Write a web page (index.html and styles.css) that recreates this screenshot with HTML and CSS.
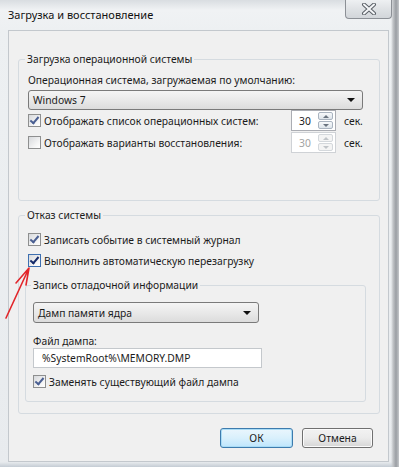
FILE: index.html
```html
<!DOCTYPE html>
<html lang="ru">
<head>
  <meta charset="UTF-8" />
  <title>Загрузка и восстановление</title>
  <link rel="stylesheet" href="styles.css">
</head>
<body>

  <div class="window">
    <div class="titlebar">
      <span class="title">Загрузка и восстановление</span>
      <span class="close">
        <svg width="16" height="12" viewBox="0 0 16 12">
          <path d="M3 1.5 L13 10.5 M13 1.5 L3 10.5" stroke="#5a5f66" stroke-width="4" stroke-linecap="round"/>
          <path d="M3 1.5 L13 10.5 M13 1.5 L3 10.5" stroke="#f4f6f8" stroke-width="2" stroke-linecap="round"/>
        </svg>
      </span>
    </div>

    <div class="client">
      <fieldset class="group group-boot">
        <legend>Загрузка операционной системы</legend>
        <div class="caption">Операционная система, загружаемая по умолчанию:</div>
        <div class="combo combo-os"><span>Windows 7</span><i class="arrow"></i></div>
        <div class="row">
          <span class="check checked"></span>
          <span class="label grow">Отображать список операционных систем:</span>
          <span class="spin"><span class="num">30</span><span class="spin-btns"><b class="up"></b><b class="down"></b></span></span>
          <span class="unit">сек.</span>
        </div>
        <div class="row">
          <span class="check"></span>
          <span class="label grow">Отображать варианты восстановления:</span>
          <span class="spin disabled"><span class="num">30</span><span class="spin-btns"><b class="up"></b><b class="down"></b></span></span>
          <span class="unit">сек.</span>
        </div>
      </fieldset>

      <fieldset class="group group-fail">
        <legend>Отказ системы</legend>
        <div class="row">
          <span class="check checked"></span>
          <span class="label">Записать событие в системный журнал</span>
        </div>
        <div class="row">
          <span class="check checked focused"></span>
          <span class="label">Выполнить автоматическую перезагрузку</span>
        </div>

        <fieldset class="group group-dump">
          <legend>Запись отладочной информации</legend>
          <div class="combo combo-dump"><span>Дамп памяти ядра</span><i class="arrow"></i></div>
          <div class="caption caption-file">Файл дампа:</div>
          <div class="textbox">%SystemRoot%\MEMORY.DMP</div>
          <div class="row">
            <span class="check checked"></span>
            <span class="label">Заменять существующий файл дампа</span>
          </div>
        </fieldset>
      </fieldset>

      <div class="buttons">
        <span class="btn btn-default">ОК</span>
        <span class="btn btn-cancel">Отмена</span>
      </div>
    </div>

    <!-- red pointer drawn over the screenshot -->
    <svg class="pointer" width="40" height="60" viewBox="0 0 40 60">
      <path d="M29 2 L6 52 M29 2 L16 17 M29 2 L26 19" stroke="#e2262b" stroke-width="1.6" fill="none" stroke-linecap="round"/>
    </svg>
  </div>

</body>
</html>
```

FILE: styles.css
```css
body {
  margin: 0;
  font-family: 'Noto Sans', 'Open Sans', sans-serif;
  font-size: 10.3px;
  color: #1b1b1b;
  background: #c9d2da;
}

.window {
  position: relative;
  width: 399px;
  height: 467px;
  overflow: hidden;
  background:
    linear-gradient(to right, transparent 391px, #c2c5c8 393px, #9a9ea3 396px, #c4c7ca 399px),
    linear-gradient(to bottom, transparent 462px, #c4ccd4 467px),
    linear-gradient(#d9dde1 0, #f0f2f4 10px, #edf0f2 30px, #e8ebee 100%);
}

.titlebar {
  height: 30px;
  display: flex;
  align-items: flex-start;
  justify-content: space-between;
  padding: 0 7px 0 8px;
}

.title {
  font-size: 11px;
  line-height: 16px;
  margin-top: 7px;
  color: #111;
}

.close {
  width: 45px;
  height: 18px;
  border: 1px solid #8c9096;
  border-top: none;
  border-radius: 0 0 4px 4px;
  background: linear-gradient(#eef0f2, #dfe2e5 50%, #d2d6da);
  display: flex;
  align-items: center;
  justify-content: center;
}

.client {
  box-sizing: border-box;
  height: 432px;
  margin: 0 10px 0 8px;
  padding: 20px 0 0 0;
  border: 1px solid #c3c8cd;
  background: #f0f0f0;
}

/* group boxes */
.group {
  margin: 0;
  border: 1px solid #d5dbe0;
  border-radius: 3px;
  min-inline-size: 0;
}
.group legend {
  padding: 0 2px;
  line-height: 16px;
  color: #1b1b1b;
}

.group-boot {
  margin: 0 8px 0 9px;
  height: 150px;
  box-sizing: border-box;
  padding: 5px 9px 0 9px;
}
.group-boot legend { margin-left: -3px; }

.group-fail {
  margin: 6px 8px 0 9px;
  height: 207px;
  box-sizing: border-box;
  padding: 6px 9px 0 9px;
}
.group-fail legend { margin-left: -3px; }

.group-dump {
  margin: 6px 4px 0 -3px;
  height: 125px;
  box-sizing: border-box;
  padding: 9px 7px 0 7px;
}
.group-dump legend { margin-left: -2px; }

.caption {
  line-height: 16px;
}
.caption-file {
  line-height: 14px;
  margin-top: 11px;
}

/* combo boxes */
.combo {
  box-sizing: border-box;
  height: 20px;
  margin-top: 2px;
  display: flex;
  align-items: center;
  justify-content: space-between;
  padding: 0 7px 0 4px;
  border: 1px solid #7a7a7a;
  border-radius: 3px;
  background: linear-gradient(#f4f4f4, #e9e9e9 50%, #dcdcdc);
}
.combo-os { width: 335px; }
.combo-dump { width: 226px; height: 21px; margin-top: 0; }
.arrow {
  width: 0;
  height: 0;
  border-left: 4px solid transparent;
  border-right: 4px solid transparent;
  border-top: 4px solid #111;
}

/* check rows */
.row {
  height: 21px;
  display: flex;
  align-items: center;
}
.group-boot .row:first-of-type { margin-top: 6px; }
.group-boot .row + .row { margin-top: 1px; }
.group-dump .row { margin-top: 3px; }

.check {
  position: relative;
  box-sizing: border-box;
  width: 13px;
  height: 13px;
  margin-right: 3px;
  flex: none;
  border: 1px solid #8e8f8f;
  background: linear-gradient(135deg, #d7d9dc, #f6f6f6 70%, #fff);
}
.check.checked::after {
  content: "";
  position: absolute;
  left: 3px;
  top: 0;
  width: 3px;
  height: 7px;
  border: solid #4a5f92;
  border-width: 0 2px 2px 0;
  transform: rotate(40deg);
}
.check.focused {
  border-color: #3d6fb0;
}
.check.focused::after {
  border-color: #152b6a;
  border-width: 0 2.5px 2.5px 0;
}

.label { white-space: nowrap; }
.grow { flex: 1; }

/* spin boxes */
.spin {
  box-sizing: border-box;
  width: 45px;
  height: 21px;
  display: flex;
  align-items: center;
  justify-content: space-between;
  padding: 0 2px 0 7px;
  border: 1px solid #abadb3;
  background: #fff;
}
.spin-btns {
  display: flex;
  flex-direction: column;
  gap: 1px;
}
.spin-btns b {
  box-sizing: border-box;
  width: 15px;
  height: 8px;
  border: 1px solid #aab4c0;
  border-radius: 2px;
  background: linear-gradient(#f7f9fb, #dde4ea);
  display: flex;
  align-items: center;
  justify-content: center;
}
.spin-btns b::after {
  content: "";
  border-left: 3px solid transparent;
  border-right: 3px solid transparent;
}
.spin-btns .up::after { border-bottom: 3px solid #6a7480; }
.spin-btns .down::after { border-top: 3px solid #6a7480; }

.spin.disabled {
  border-color: #cfd2d6;
  color: #a3a3a3;
}
.spin.disabled .spin-btns b {
  border-color: #d4d8dc;
  background: #f4f4f4;
}
.spin.disabled .spin-btns b::after { border-bottom-color: #c0c4c8; border-top-color: #c0c4c8; }

.unit {
  width: 26px;
  margin-left: 8px;
}

.textbox {
  box-sizing: border-box;
  width: 229px;
  height: 20px;
  padding: 0 8px;
  line-height: 18px;
  border: 1px solid #c4c8cc;
  background: #fff;
}

/* dialog buttons */
.buttons {
  display: flex;
  justify-content: flex-end;
  gap: 9px;
  margin: 14px 15px 0 0;
}
.btn {
  box-sizing: border-box;
  height: 20px;
  line-height: 18px;
  text-align: center;
  border-radius: 3px;
}
.btn-default {
  width: 73px;
  border: 1px solid #3d7bad;
  background: linear-gradient(#eaf6fd, #d9f0fc 50%, #bee6fd);
  box-shadow: inset 0 0 0 1px #a9dcf6;
}
.btn-cancel {
  width: 71px;
  border: 1px solid #707070;
  background: linear-gradient(#f2f2f2, #ebebeb 50%, #d6d6d6);
  box-shadow: inset 0 0 0 1px #fbfbfb;
}

.pointer {
  position: absolute;
  left: 0;
  top: 266px;
}
```
